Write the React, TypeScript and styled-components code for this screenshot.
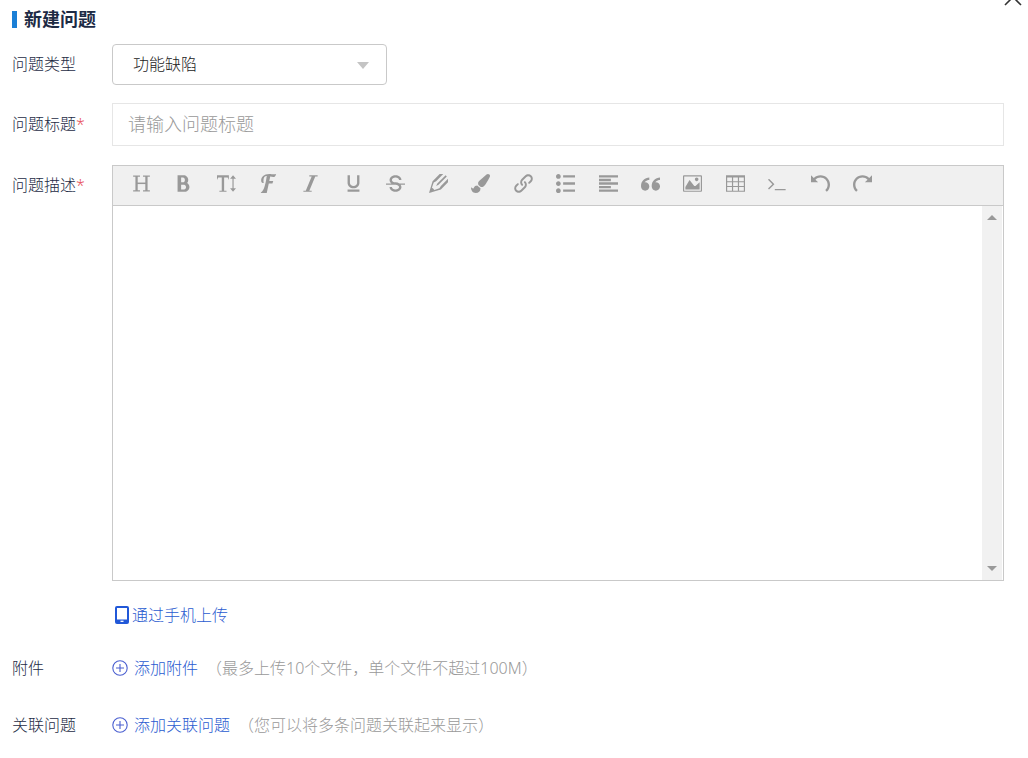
import React from "react";
import styled, { createGlobalStyle } from "styled-components";
import {
  ImBold,
  ImFont,
  ImImage,
  ImItalic,
  ImLink,
  ImList2,
  ImParagraphLeft,
  ImPencil2,
  ImQuotesLeft,
  ImRedo,
  ImStrikethrough,
  ImTable2,
  ImTextHeight,
  ImUnderline,
  ImUndo,
} from "react-icons/im";
import { FaPaintBrush } from "react-icons/fa";

const GlobalStyle = createGlobalStyle`
  *, *::before, *::after { box-sizing: border-box; }
  body {
    margin: 0;
    background: #fff;
    color: #1d2b45;
    font: 300 16px/24px "Noto Sans", "Noto Sans CJK SC", sans-serif;
    overflow-x: hidden;
  }
  button, input, select, textarea { font: inherit; }
`;

const Dialog = styled.main`
  position: relative;
  overflow: hidden;
  padding: 7px 24px 20px 12px;
`;

const Close = styled.button`
  position: absolute;
  top: -12px;
  right: 6px;
  width: 18px;
  height: 18px;
  padding: 0;
  border: 0;
  background: none;
  color: #333;
  svg { display: block; }
`;

const Title = styled.h1`
  display: flex;
  align-items: center;
  gap: 7px;
  margin: 0 0 13px;
  font-size: 18px;
  line-height: 24px;
  font-weight: 700;
  &::before {
    content: "";
    width: 5px;
    height: 17px;
    background: #1b7fd6;
  }
`;

const Form = styled.form`
  display: flex;
  flex-direction: column;
`;

const Row = styled.div<{ $gap?: number; $top?: boolean }>`
  display: grid;
  grid-template-columns: 100px minmax(0, 1fr);
  align-items: ${(p) => (p.$top ? "start" : "center")};
  margin-bottom: ${(p) => p.$gap ?? 0}px;
`;

const Label = styled.label<{ $inset?: number }>`
  padding-top: ${(p) => p.$inset ?? 0}px;
  padding-bottom: 2px;
`;

const Required = styled.span`
  color: #e8505c;
`;

const SelectBox = styled.div`
  position: relative;
  width: 275px;
  svg {
    position: absolute;
    right: 18px;
    top: 18px;
    pointer-events: none;
  }
`;

const Select = styled.select`
  display: block;
  width: 100%;
  height: 41px;
  padding: 0 40px 2px 20px;
  border: 1px solid #c9c9c9;
  border-radius: 4px;
  appearance: none;
  background: #fff;
  color: #222;
`;

const TitleInput = styled.input`
  display: block;
  width: 100%;
  height: 43px;
  padding: 0 15px 2px;
  border: 1px solid #e6e6e6;
  color: #222;
  font-size: 18px;
  &::placeholder { color: #999; opacity: 1; }
`;

const Editor = styled.div`
  border: 1px solid #c9c9c9;
`;

const Toolbar = styled.div`
  height: 40px;
  padding: 0 7px;
  border-bottom: 1px solid #c9c9c9;
  background: #f0f0f0;
`;

const Tools = styled.div`
  display: grid;
  grid-template-columns: repeat(18, minmax(0, 1fr));
  max-width: 764px;
`;

const Tool = styled.button`
  display: flex;
  align-items: center;
  justify-content: center;
  height: 35px;
  padding: 0;
  border: 0;
  background: none;
  color: #999;
`;

const Writing = styled.div`
  display: flex;
  height: 374px;
`;

const Text = styled.textarea`
  flex: 1;
  min-width: 0;
  padding: 10px;
  border: 0;
  outline: 0;
  resize: none;
  overflow: hidden;
`;

const ScrollTrack = styled.div`
  display: flex;
  flex-direction: column;
  justify-content: space-between;
  width: 20px;
  margin-right: 1px;
  background: #f1f1f1;
`;

const ScrollArrow = styled.button`
  display: flex;
  align-items: center;
  justify-content: center;
  height: 23px;
  padding: 0;
  border: 0;
  background: none;
`;

const Action = styled.a<{ $gap?: number }>`
  display: inline-flex;
  align-items: center;
  gap: ${(p) => p.$gap ?? 0}px;
  color: #2a5bd0;
  text-decoration: none;
`;

const PhoneLine = styled.div`
  grid-column: 2;
  padding-left: 3px;
`;

const Attach = styled.div`
  display: flex;
  align-items: center;
  gap: 8px;
`;

const Hint = styled.span`
  color: #999;
`;

const HeaderIcon = () => (
  <svg width="19" height="19" viewBox="0 0 20 20" fill="none" stroke="currentColor">
    <path d="M4.8 2v16M15.2 2v16" strokeWidth="2.4" />
    <path d="M4.8 9.8h10.4" strokeWidth="1.6" />
    <path d="M1.2 2.2h7.2M11.6 2.2h7.2M1.2 17.8h7.2M11.6 17.8h7.2" strokeWidth="1.4" />
  </svg>
);

const TerminalIcon = () => (
  <svg width="19" height="19" viewBox="0 0 1792 1792" fill="currentColor">
    <path d="M585 983l-466 466q-10 10-23 10t-23-10l-50-50q-10-10-10-23t10-23l393-393-393-393q-10-10-10-23t10-23l50-50q10-10 23-10t23 10l466 466q10 10 10 23t-10 23zm1079 457v64q0 14-9 23t-23 9h-960q-14 0-23-9t-9-23v-64q0-14 9-23t23-9h960q14 0 23 9t9 23z" />
  </svg>
);

const PlusCircle = () => (
  <svg width="16" height="16" viewBox="0 0 16 16" fill="none" stroke="#4a5fd0" strokeWidth="1.1">
    <circle cx="8" cy="8" r="7.2" />
    <path d="M8 4v8M4 8h8" />
  </svg>
);

const PhoneIcon = () => (
  <svg width="14" height="18" viewBox="0 0 14 18">
    <rect width="14" height="18" rx="2" fill="#2158d8" />
    <path d="M2 2h10v11.5H2z" fill="#fff" />
    <path d="M5.5 15.3h3" stroke="#fff" strokeWidth="1.3" />
  </svg>
);

const tools: [string, React.ReactNode][] = [
  ["标题", <HeaderIcon />],
  ["粗体", <ImBold size={19} />],
  ["字号", <ImTextHeight size={19} />],
  ["字体", <ImFont size={19} />],
  ["斜体", <ImItalic size={19} />],
  ["下划线", <ImUnderline size={19} />],
  ["删除线", <ImStrikethrough size={19} />],
  ["文字颜色", <ImPencil2 size={19} />],
  ["背景颜色", <FaPaintBrush size={19} />],
  ["链接", <ImLink size={19} />],
  ["列表", <ImList2 size={19} />],
  ["对齐", <ImParagraphLeft size={19} />],
  ["引用", <ImQuotesLeft size={19} />],
  ["图片", <ImImage size={19} />],
  ["表格", <ImTable2 size={19} />],
  ["代码", <TerminalIcon />],
  ["撤销", <ImUndo size={19} />],
  ["重做", <ImRedo size={19} />],
];

export default function App() {
  return (
    <>
      <GlobalStyle />
      <Dialog>
        <Close type="button" aria-label="关闭">
          <svg width="18" height="18" viewBox="0 0 18 18" stroke="currentColor" strokeWidth="1.6">
            <path d="M1 1l16 16M17 1L1 17" />
          </svg>
        </Close>
        <Title>新建问题</Title>
        <Form>
          <Row $gap={18}>
            <Label htmlFor="type">问题类型</Label>
            <SelectBox>
              <Select id="type" defaultValue="bug">
                <option value="bug">功能缺陷</option>
              </Select>
              <svg width="12" height="7" viewBox="0 0 12 7">
                <path d="M0 0h12L6 7z" fill="#c4c4c4" />
              </svg>
            </SelectBox>
          </Row>
          <Row $gap={19}>
            <Label htmlFor="title">
              问题标题<Required>*</Required>
            </Label>
            <TitleInput id="title" placeholder="请输入问题标题" />
          </Row>
          <Row $gap={22} $top>
            <Label htmlFor="description" $inset={8}>
              问题描述<Required>*</Required>
            </Label>
            <Editor>
              <Toolbar>
                <Tools>
                  {tools.map(([name, icon]) => (
                    <Tool key={name} type="button" aria-label={name}>
                      {icon}
                    </Tool>
                  ))}
                </Tools>
              </Toolbar>
              <Writing>
                <Text id="description" />
                <ScrollTrack>
                  <ScrollArrow type="button" aria-label="向上滚动">
                    <svg width="10" height="5" viewBox="0 0 10 5">
                      <path d="M0 5h10L5 0z" fill="#999" />
                    </svg>
                  </ScrollArrow>
                  <ScrollArrow type="button" aria-label="向下滚动">
                    <svg width="10" height="5" viewBox="0 0 10 5">
                      <path d="M0 0h10L5 5z" fill="#999" />
                    </svg>
                  </ScrollArrow>
                </ScrollTrack>
              </Writing>
            </Editor>
          </Row>
          <Row $gap={26}>
            <PhoneLine>
              <Action href="#phone" $gap={3}>
                <PhoneIcon />
                通过手机上传
              </Action>
            </PhoneLine>
          </Row>
          <Row $gap={33}>
            <span>附件</span>
            <Attach>
              <Action href="#attach" $gap={6}>
                <PlusCircle />
                添加附件
              </Action>
              <Hint>（最多上传10个文件，单个文件不超过100M）</Hint>
            </Attach>
          </Row>
          <Row>
            <span>关联问题</span>
            <Attach>
              <Action href="#relate" $gap={6}>
                <PlusCircle />
                添加关联问题
              </Action>
              <Hint>（您可以将多条问题关联起来显示）</Hint>
            </Attach>
          </Row>
        </Form>
      </Dialog>
    </>
  );
}
